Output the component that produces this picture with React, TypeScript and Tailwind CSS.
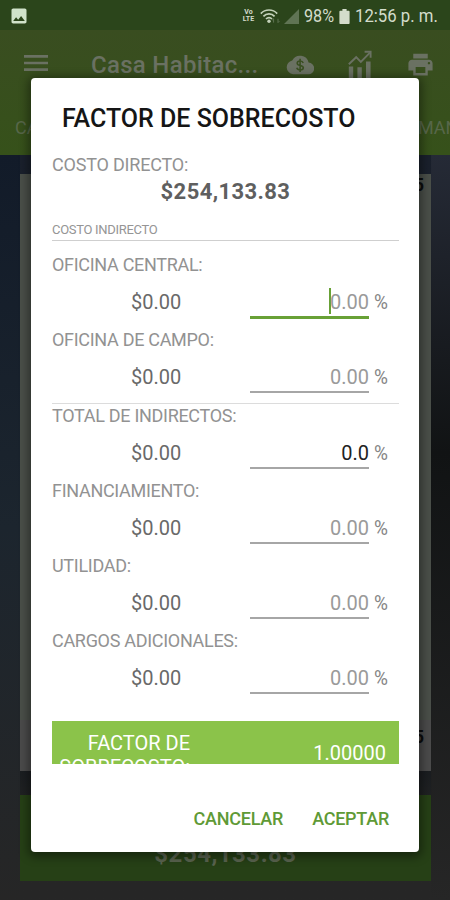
import { MdMenu, MdPrint, MdImage } from 'react-icons/md'

type Row = {
  label: string
  amount: string
  percent: string
  state?: 'focused' | 'filled'
}

const indirectRows: Row[] = [
  { label: 'OFICINA CENTRAL:', amount: '$0.00', percent: '0.00', state: 'focused' },
  { label: 'OFICINA DE CAMPO:', amount: '$0.00', percent: '0.00' },
]

const totalRows: Row[] = [
  { label: 'TOTAL DE INDIRECTOS:', amount: '$0.00', percent: '0.0', state: 'filled' },
  { label: 'FINANCIAMIENTO:', amount: '$0.00', percent: '0.00' },
  { label: 'UTILIDAD:', amount: '$0.00', percent: '0.00' },
  { label: 'CARGOS ADICIONALES:', amount: '$0.00', percent: '0.00' },
]

function WifiIcon() {
  return (
    <svg width="21" height="15" viewBox="0 0 21 15">
      <g fill="none" stroke="#c3d2ba" strokeWidth="1.7">
        <path d="M.8 4.6C5.2-.2 12.8-.2 17.2 4.6" />
        <path d="M3.4 7.4c3-3.3 8.2-3.3 11.2 0" />
        <path d="M6 10c1.7-1.8 4.3-1.8 6 0" />
      </g>
      <circle cx="9" cy="12.3" r="1.7" fill="#c3d2ba" />
      <path d="M13.6 13.6V9.8m-1.4 1.4 1.4-1.4M18 9.8v3.8m1.4-1.4L18 13.6" fill="none" stroke="#5f7454" />
    </svg>
  )
}

function BatteryIcon() {
  return (
    <svg width="11" height="15" viewBox="0 0 11 15">
      <path
        d="M3.4 0h4.2v1.8h2c.6 0 1 .4 1 1V14c0 .6-.4 1-1 1H1.4c-.6 0-1-.4-1-1V2.8c0-.6.4-1 1-1h2z"
        fill="#d3dccb"
      />
    </svg>
  )
}

function CloudMoneyIcon() {
  return (
    <svg width="28" height="20" viewBox="0 0 28 20">
      <path
        d="M22.6 7.6A8.8 8.8 0 0 0 6.2 5.4 7 7 0 0 0 7 19.2h15.2a5.8 5.8 0 0 0 .4-11.6z"
        fill="#6a7162"
      />
      <path
        d="M17.2 8c-.4-1.3-1.5-2-3.1-2-1.7 0-2.9.8-2.9 2.2 0 3.2 6.1 1.5 6.1 4.6 0 1.4-1.3 2.2-3 2.2-1.9 0-3.1-.8-3.5-2.2M14.1 3.7v13.2"
        fill="none"
        stroke="#3a4f22"
        strokeWidth="1.6"
      />
    </svg>
  )
}

function ChartIcon() {
  return (
    <svg width="24" height="31" viewBox="0 0 24 31">
      <path d="M.8 14.2 8.2 7.2l4.6 4.6L22 2.6" fill="none" stroke="#6a7162" strokeWidth="1.9" />
      <path d="M16.6 1.8h6v6" fill="none" stroke="#6a7162" strokeWidth="1.9" />
      <path d="M.8 16.5h4.4V31H.8zM9.4 17.2h4.4V31H9.4zM18 11.500h4.600V31H18z" fill="#6a7162" />
    </svg>
  )
}

function StatusBar() {
  return (
    <div className="flex h-[30px] items-center bg-[#2b451b] pl-[9px] pr-[11px] text-[#d3dccb]">
      <MdImage size={20} className="mt-[2px] text-[#d0e2ca]" />
      <div className="ml-auto flex items-center pt-[2px]">
        <div className="mr-[5px] flex w-[13px] flex-col items-center text-[7px] font-bold leading-[7px]">
          <span>Vo</span>
          <span>LTE</span>
        </div>
        <WifiIcon />
        <svg width="15" height="15" viewBox="0 0 15 15" className="ml-[3px] mr-[5px]">
          <path d="M15 0v15H0z" fill="#5f7454" />
        </svg>
        <span className="w-[30px] origin-left scale-x-90 whitespace-nowrap text-[18px] leading-5">98%</span>
        <div className="ml-[5px] mr-[5px]">
          <BatteryIcon />
        </div>
        <span className="w-[84px] origin-left scale-x-93 whitespace-nowrap text-[18px] leading-5">12:56 p. m.</span>
      </div>
    </div>
  )
}

function AppHeader() {
  return (
    <header className="h-[125px] bg-linear-to-b from-[#394d20] to-[#36511a]">
      <div className="flex h-[70px] items-center pl-[20px] pr-[15px] text-[#6a7162]">
        <MdMenu size={32} className="-mt-[4px]" />
        <h1 className="ml-[39px] w-[168px] whitespace-nowrap text-[24px] font-medium leading-8 tracking-[0.3px]">
          Casa Habitac...
        </h1>
        <div className="ml-auto flex items-center">
          <CloudMoneyIcon />
          <div className="ml-[34px] mr-[34px]">
            <ChartIcon />
          </div>
          <MdPrint size={29} className="-mt-[2px]" />
        </div>
      </div>
      <div className="flex h-[54px] items-center justify-between overflow-hidden pl-[15px] text-[18px] text-[#57674a]">
        <span>CA</span>
        <span className="w-[32px]">MAN</span>
      </div>
    </header>
  )
}

function EntryRow({ label, amount, percent, state }: Row) {
  const line = state === 'focused' ? 'h-[3px] bg-[#68a136]' : 'h-[2px] bg-[#a6a6a6]'
  return (
    <div className="h-[75px]">
      <div className="h-6 text-[18px] leading-6 tracking-[-0.3px] text-[#929292]">{label}</div>
      <div className="flex text-[20px] leading-[26px]">
        <div className="mt-[12px] w-[198px] pl-[79px] text-[#696969]">{amount}</div>
        <div className="w-[119px] pt-[12px]">
          <div className={`flex justify-end ${state === 'filled' ? 'text-[#222]' : 'text-[#9a9a9a]'}`}>
            {state === 'focused' && <span className="-mr-px -mt-px h-[26px] w-[2px] bg-[#68a136]" />}
            {percent}
          </div>
          <div className={`mt-px ${line}`} />
        </div>
        <div className="mt-[12px] pl-[5px] text-[#858585]">
          <span className="inline-block origin-left scale-x-95">%</span>
        </div>
      </div>
    </div>
  )
}

function OverheadDialog() {
  return (
    <div className="absolute left-[31px] top-[78px] flex h-[774px] w-[388px] flex-col rounded-[4px] bg-white pl-[21px] pr-[20px] shadow-[0_2px_10px_3px_rgba(0,0,0,0.4)]">
      <h2 className="mt-[25px] whitespace-nowrap pl-[10px] text-[25px] font-medium leading-8 text-[#151515]">
        FACTOR DE SOBRECOSTO
      </h2>

      <div className="mt-[18px] h-6 text-[18px] leading-6 tracking-[-0.2px] text-[#929292]">COSTO DIRECTO:</div>
      <div className="h-[30px] text-center text-[22px] font-bold leading-[30px] tracking-[0.4px] text-[#5f5f5f]">
        $254,133.83
      </div>
      <div className="mt-[13px] h-[20px] text-[13px] leading-[19px] tracking-[-0.3px] text-[#959595]">
        COSTO INDIRECTO
      </div>
      <div className="h-px bg-[#cfcfcf]" />

      <div className="mt-[12px]">
        {indirectRows.map((row) => (
          <EntryRow key={row.label} {...row} />
        ))}
      </div>
      <div className="h-px shrink-0 bg-[#dcdcdc]" />
      <div>
        {totalRows.map((row) => (
          <EntryRow key={row.label} {...row} />
        ))}
      </div>

      <div className="mt-[17px] flex h-[43px] overflow-hidden bg-[#8bc34a] text-[20px] text-white">
        <div className="w-[173px] pr-[35px] pt-[10px] text-right leading-[24px]">
          FACTOR DE SOBRECOSTO:
        </div>
        <div className="ml-auto pr-[13px] pt-[22px] leading-[21px]">1.00000</div>
      </div>

      <div className="mt-[43px] flex justify-end gap-[29px] pr-[10px] text-[18px] font-medium leading-6 tracking-[-0.25px] text-[#5f9a36]">
        <button>CANCELAR</button>
        <button>ACEPTAR</button>
      </div>
    </div>
  )
}

export default function App() {
  return (
    <div className="relative h-[900px] w-[450px] overflow-hidden bg-[#262626] font-['Roboto',sans-serif]">
      <StatusBar />
      <AppHeader />
      <main className="flex h-[745px] bg-linear-to-b from-[#1a202c] via-[#161a1e] via-80% to-[#262626] to-90%">
        <div className="w-[20px] bg-linear-to-b from-[#121b29] via-[#1c252e] to-[#262626]" />
        <div className="flex grow flex-col pt-[19px]">
          <div className="flex h-[597px] flex-col justify-between bg-[#4a4f49] text-right text-[18px] font-bold text-[#0c0c0c]">
            <div className="h-[50px] pr-[7px] pt-[1px] leading-5">5</div>
            <div className="h-[51px] bg-[#4b4b4b] pr-[7px] pt-[7px] leading-5">5</div>
          </div>
          <div className="mt-[24px] h-[86px] bg-[#264016] pt-[43px] text-center text-[24px] font-bold leading-8 tracking-[0.5px] text-[#59634f]">
            $254,133.83
          </div>
        </div>
        <div className="w-[19px] bg-linear-to-b from-[#252a36] via-[#111314] via-40% to-[#262626]" />
      </main>
      <OverheadDialog />
    </div>
  )
}
